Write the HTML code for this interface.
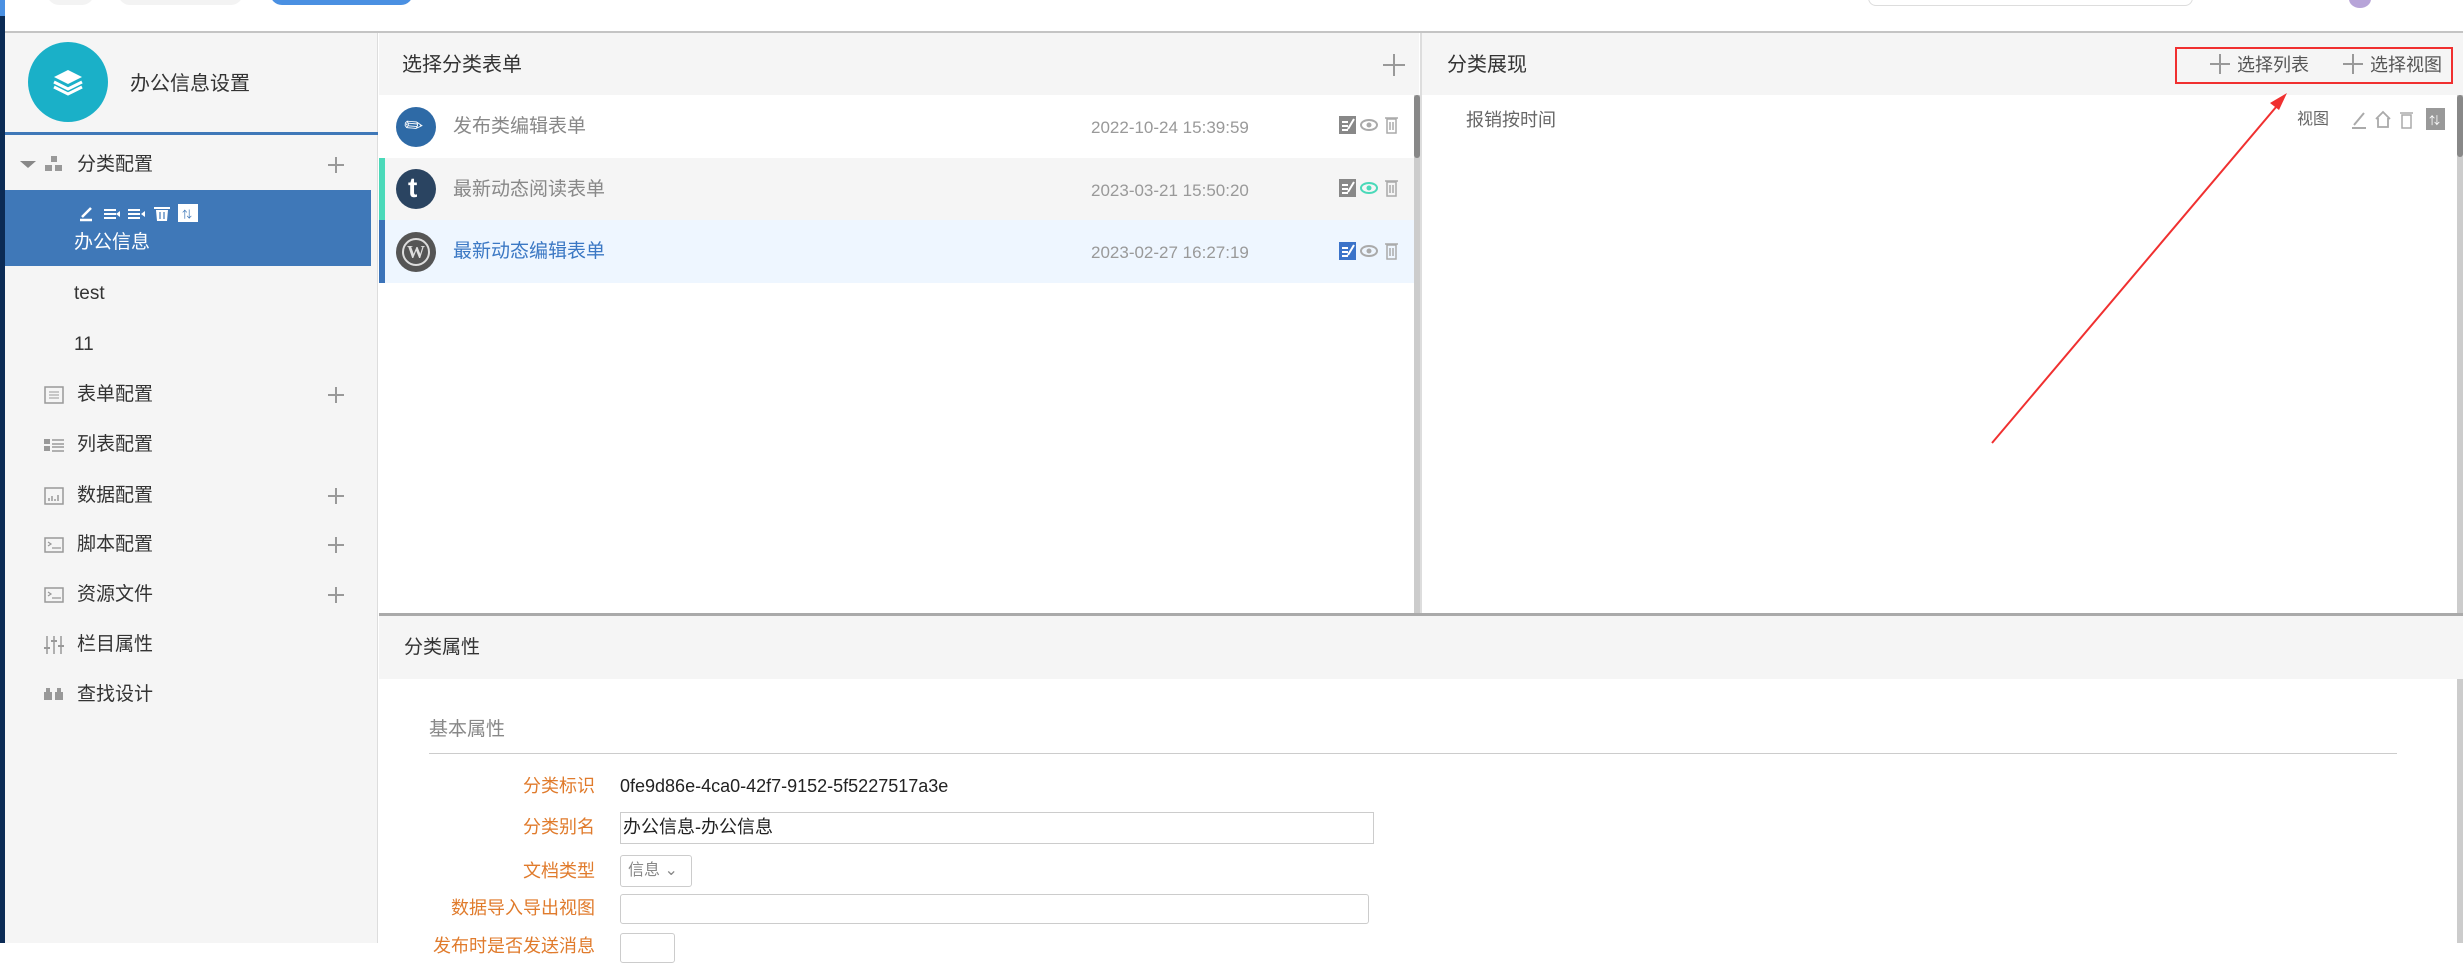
<!DOCTYPE html>
<html><head><meta charset="utf-8"><style>
*{margin:0;padding:0;box-sizing:border-box}
body{width:2463px;height:943px;overflow:hidden;background:#fff;position:relative;font-family:"Liberation Sans","Noto Sans CJK SC",sans-serif;}
.a{position:absolute}
.t{position:absolute;white-space:nowrap;line-height:1}
.mi{font-size:19px;color:#333}
.plus{position:absolute;width:16px;height:16px}
.plus:before{content:"";position:absolute;left:0;top:7px;width:16px;height:2px;background:#999}
.plus:after{content:"";position:absolute;left:7px;top:0;width:2px;height:16px;background:#999}
.lbl{position:absolute;right:1868px;font-size:18px;color:#e07b2c;white-space:nowrap;line-height:1}
</style></head><body>
<div class="a" style="left:0;top:0;width:5px;height:16px;background:#4a90e2"></div>
<div class="a" style="left:0;top:16px;width:5px;height:927px;background:#0b2b55"></div>
<div class="a" style="left:47px;top:-20px;width:47px;height:25px;border-radius:12px;background:#f3f3f3"></div>
<div class="a" style="left:118px;top:-20px;width:125px;height:25px;border-radius:12px;background:#f3f3f3"></div>
<div class="a" style="left:270px;top:-20px;width:143px;height:25px;border-radius:12px;background:#4a90e2"></div>
<div class="a" style="left:1868px;top:-20px;width:325px;height:26px;border-radius:8px;border:1px solid #ddd"></div>
<div class="a" style="left:2349px;top:-10px;width:22px;height:18px;border-radius:50%;background:#b7a4d8"></div>
<div class="a" style="left:5px;top:31px;width:2458px;height:2px;background:#c4c4c4"></div>

<div class="a" style="left:5px;top:33px;width:373px;height:910px;background:#f5f5f5;border-right:1px solid #ddd"></div>
<div class="a" style="left:28px;top:42px;width:80px;height:80px;border-radius:50%;background:#1ab0c8"></div>
<svg class="a" style="left:48px;top:62px" width="40" height="40" viewBox="0 0 40 40"><path d="M20 8 L34 15 L20 22 L6 15Z" fill="#fff"/><path d="M6 20 L20 27 L34 20" stroke="#fff" stroke-width="3" fill="none"/><path d="M6 25 L20 32 L34 25" stroke="#fff" stroke-width="3" fill="none"/></svg>
<div class="t" style="left:130px;top:74px;font-size:20px;color:#333">办公信息设置</div>
<div class="a" style="left:5px;top:132px;width:373px;height:3px;background:#3f78b8"></div>

<div class="a" style="left:20px;top:161px;width:0;height:0;border-left:8px solid transparent;border-right:8px solid transparent;border-top:7px solid #888"></div>
<svg class="a" style="left:45px;top:156px" width="18" height="16"><rect x="6" y="0" width="6" height="6" fill="#999"/><rect x="0" y="9" width="7" height="6" fill="#999"/><rect x="10" y="9" width="7" height="6" fill="#999"/></svg>
<div class="t mi" style="left:77px;top:155px">分类配置</div><div class="plus" style="left:328px;top:157px"></div>

<div class="a" style="left:5px;top:190px;width:366px;height:76px;background:#3f78b8"></div>
<svg class="a" style="left:78px;top:203px" width="122" height="20"><path d="M2 17 L14 17 M4 14 L13 5" stroke="#fff" stroke-width="2.5"/><path d="M26 7h12M26 11h12M26 15h12" stroke="#fff" stroke-width="2"/><path d="M42 8v6l-4-3z" fill="#fff"/><path d="M50 7h12M50 11h12M50 15h12" stroke="#fff" stroke-width="2"/><path d="M67 8v6l-4-3z" fill="#fff"/><path d="M76 5h16" stroke="#fff" stroke-width="2"/><path d="M78 7h12l-1 11h-10z" fill="#fff"/><path d="M82 9v7M86 9v7" stroke="#3f78b8" stroke-width="1.2"/><rect x="100" y="1" width="20" height="18" fill="#fff"/><text x="104" y="15" font-size="10" fill="#3f78b8">⇅</text></svg>
<div class="t" style="left:74px;top:233px;font-size:19px;color:#fff">办公信息</div>
<div class="t mi" style="left:74px;top:284px">test</div>
<div class="t mi" style="left:74px;top:335px">11</div>

<svg class="a" style="left:44px;top:386px" width="20" height="18"><rect x="1" y="1" width="18" height="16" fill="none" stroke="#999" stroke-width="1.5"/><path d="M5 6h10M5 9h10M5 12h10" stroke="#999"/></svg>
<div class="t mi" style="left:77px;top:385px">表单配置</div><div class="plus" style="left:328px;top:387px"></div>
<svg class="a" style="left:44px;top:436px" width="20" height="18"><rect x="0" y="3" width="6" height="5" fill="#999"/><rect x="0" y="10" width="6" height="5" fill="#999"/><path d="M8 4h12M8 8h12M8 11h12M8 15h12" stroke="#999" stroke-width="1.5"/></svg>
<div class="t mi" style="left:77px;top:435px">列表配置</div>
<svg class="a" style="left:44px;top:487px" width="20" height="18"><rect x="1" y="1" width="18" height="16" fill="none" stroke="#999" stroke-width="1.5"/><path d="M5 14v-3M8 14v-5M11 14v-2M14 14v-6" stroke="#999" stroke-width="1.5"/></svg>
<div class="t mi" style="left:77px;top:486px">数据配置</div><div class="plus" style="left:328px;top:488px"></div>
<svg class="a" style="left:44px;top:536px" width="20" height="18"><rect x="1" y="2" width="18" height="14" fill="none" stroke="#999" stroke-width="1.5"/><path d="M4 6l3 2-3 2M8 12h9" stroke="#999" stroke-width="1.2" fill="none"/></svg>
<div class="t mi" style="left:77px;top:535px">脚本配置</div><div class="plus" style="left:328px;top:537px"></div>
<svg class="a" style="left:44px;top:586px" width="20" height="18"><rect x="1" y="2" width="18" height="14" fill="none" stroke="#999" stroke-width="1.5"/><path d="M4 6l3 2-3 2M8 12h9" stroke="#999" stroke-width="1.2" fill="none"/></svg>
<div class="t mi" style="left:77px;top:585px">资源文件</div><div class="plus" style="left:328px;top:587px"></div>
<svg class="a" style="left:44px;top:635px" width="20" height="20"><path d="M3 1v18M10 1v18M17 1v18" stroke="#999" stroke-width="1.5"/><path d="M0 13h6M7 6h6M14 11h6" stroke="#999" stroke-width="2"/></svg>
<div class="t mi" style="left:77px;top:635px">栏目属性</div>
<svg class="a" style="left:44px;top:687px" width="20" height="14"><rect x="0" y="5" width="8" height="8" fill="#999"/><rect x="11" y="5" width="8" height="8" fill="#999"/><rect x="2" y="1" width="4" height="5" fill="#999"/><rect x="13" y="1" width="4" height="5" fill="#999"/></svg>
<div class="t mi" style="left:77px;top:685px">查找设计</div>

<div class="a" style="left:379px;top:33px;width:1040px;height:62px;background:#f5f5f5"></div>
<div class="t" style="left:402px;top:55px;font-size:20px;color:#333">选择分类表单</div>
<svg class="a" style="left:1383px;top:54px" width="22" height="22"><path d="M11 0v22M0 11h22" stroke="#999" stroke-width="2"/></svg>
<div class="a" style="left:379px;top:158px;width:1035px;height:62px;background:#f5f5f5"></div>
<div class="a" style="left:379px;top:158px;width:6px;height:62px;background:#4ad9b9"></div>
<div class="a" style="left:379px;top:220px;width:1035px;height:63px;background:#eef6ff"></div>
<div class="a" style="left:379px;top:220px;width:6px;height:63px;background:#3b73b9"></div>
<div class="a" style="left:396px;top:107px;width:40px;height:40px;border-radius:50%;background:#2e6aa6"></div>
<div class="t" style="left:405px;top:115px;font-size:22px;color:#fff;transform:rotate(-40deg)">✎</div>
<div class="a" style="left:396px;top:169px;width:40px;height:40px;border-radius:50%;background:#2a4461"></div>
<div class="t" style="left:408px;top:174px;font-size:28px;font-weight:bold;color:#fff">t</div>
<div class="a" style="left:396px;top:232px;width:40px;height:40px;border-radius:50%;background:#555"></div>
<div class="a" style="left:402px;top:238px;width:28px;height:28px;border-radius:50%;border:2px solid #ddd;color:#ddd;font:bold 18px 'Liberation Serif',serif;text-align:center;line-height:24px">W</div>
<div class="t" style="left:453px;top:117px;font-size:19px;color:#888">发布类编辑表单</div>
<div class="t" style="left:453px;top:180px;font-size:19px;color:#888">最新动态阅读表单</div>
<div class="t" style="left:453px;top:242px;font-size:19px;color:#3b78c4">最新动态编辑表单</div>
<div class="t" style="left:1091px;top:119px;font-size:17px;color:#999">2022-10-24 15:39:59</div>
<div class="t" style="left:1091px;top:182px;font-size:17px;color:#999">2023-03-21 15:50:20</div>
<div class="t" style="left:1091px;top:244px;font-size:17px;color:#999">2023-02-27 16:27:19</div>
<svg class="a" style="left:1339px;top:114px" width="70" height="22"><rect x="0" y="2" width="17" height="18" fill="#888"/><path d="M3 8h6M3 12h6M3 16h6M9 15l6-10" stroke="#fff" stroke-width="2"/><ellipse cx="30" cy="11" rx="8" ry="5" fill="none" stroke="#aaa" stroke-width="2"/><circle cx="30" cy="11" r="2.5" fill="#aaa"/><rect x="48" y="5" width="9" height="14" fill="none" stroke="#aaa" stroke-width="1.5"/><path d="M46 4h13M51 8v8M54 8v8" stroke="#aaa" stroke-width="1.5"/></svg>
<svg class="a" style="left:1339px;top:177px" width="70" height="22"><rect x="0" y="2" width="17" height="18" fill="#888"/><path d="M3 8h6M3 12h6M3 16h6M9 15l6-10" stroke="#fff" stroke-width="2"/><ellipse cx="30" cy="11" rx="8" ry="5" fill="none" stroke="#4ad9b9" stroke-width="2"/><circle cx="30" cy="11" r="2.5" fill="#4ad9b9"/><rect x="48" y="5" width="9" height="14" fill="none" stroke="#aaa" stroke-width="1.5"/><path d="M46 4h13M51 8v8M54 8v8" stroke="#aaa" stroke-width="1.5"/></svg>
<svg class="a" style="left:1339px;top:240px" width="70" height="22"><rect x="0" y="2" width="17" height="18" fill="#3b73c9"/><path d="M3 8h6M3 12h6M3 16h6M9 15l6-10" stroke="#fff" stroke-width="2"/><ellipse cx="30" cy="11" rx="8" ry="5" fill="none" stroke="#aaa" stroke-width="2"/><circle cx="30" cy="11" r="2.5" fill="#aaa"/><rect x="48" y="5" width="9" height="14" fill="none" stroke="#aaa" stroke-width="1.5"/><path d="M46 4h13M51 8v8M54 8v8" stroke="#aaa" stroke-width="1.5"/></svg>
<div class="a" style="left:1414px;top:95px;width:6px;height:518px;background:#ccc"></div>
<div class="a" style="left:1414px;top:95px;width:6px;height:63px;background:#888;border-radius:3px"></div>
<div class="a" style="left:1420px;top:33px;width:2px;height:580px;background:#ddd"></div>

<div class="a" style="left:1422px;top:33px;width:1041px;height:62px;background:#f5f5f5"></div>
<div class="t" style="left:1447px;top:55px;font-size:20px;color:#333">分类展现</div>
<div class="a" style="left:2175px;top:47px;width:278px;height:37px;border:2px solid #f03030"></div>
<svg class="a" style="left:2210px;top:54px" width="20" height="20"><path d="M10 0v20M0 10h20" stroke="#999" stroke-width="2"/></svg>
<div class="t" style="left:2237px;top:56px;font-size:18px;color:#555">选择列表</div>
<svg class="a" style="left:2343px;top:54px" width="20" height="20"><path d="M10 0v20M0 10h20" stroke="#999" stroke-width="2"/></svg>
<div class="t" style="left:2370px;top:56px;font-size:18px;color:#555">选择视图</div>
<div class="t" style="left:1466px;top:111px;font-size:18px;color:#666">报销按时间</div>
<div class="t" style="left:2297px;top:112px;font-size:16px;color:#666">视图</div>
<svg class="a" style="left:2350px;top:107px" width="100" height="24"><path d="M2 21h14M4 18l10-12" stroke="#aaa" stroke-width="2"/><path d="M26 12l7-7 7 7M28 11v9h10v-9" fill="none" stroke="#aaa" stroke-width="1.8"/><rect x="52" y="8" width="9" height="13" fill="none" stroke="#aaa" stroke-width="1.5"/><path d="M50 6h13" stroke="#aaa" stroke-width="1.5"/><rect x="76" y="1" width="19" height="22" fill="#999"/><text x="79" y="17" font-size="11" fill="#fff">⇅</text></svg>
<div class="a" style="left:2457px;top:95px;width:6px;height:518px;background:#ccc"></div>
<div class="a" style="left:2457px;top:95px;width:6px;height:62px;background:#888;border-radius:3px"></div>
<svg class="a" style="left:0;top:0" width="2463" height="943"><line x1="1992" y1="443" x2="2282" y2="100" stroke="#f03030" stroke-width="2"/><path d="M2287 93 L2270 103 L2279 110Z" fill="#f03030"/></svg>

<div class="a" style="left:379px;top:613px;width:2084px;height:3px;background:#aaa"></div>
<div class="a" style="left:379px;top:616px;width:2084px;height:63px;background:#f5f5f5"></div>
<div class="t" style="left:404px;top:638px;font-size:19px;color:#333">分类属性</div>
<div class="a" style="left:2457px;top:679px;width:6px;height:264px;background:#ccc"></div>
<div class="t" style="left:429px;top:720px;font-size:19px;color:#888">基本属性</div>
<div class="a" style="left:429px;top:753px;width:1968px;height:1px;background:#ccc"></div>
<div class="lbl" style="top:777px">分类标识</div>
<div class="t" style="left:620px;top:777px;font-size:18px;color:#222">0fe9d86e-4ca0-42f7-9152-5f5227517a3e</div>
<div class="lbl" style="top:818px">分类别名</div>
<div class="a" style="left:620px;top:812px;width:754px;height:32px;border:1px solid #ccc"></div>
<div class="t" style="left:623px;top:818px;font-size:18px;color:#222">办公信息-办公信息</div>
<div class="lbl" style="top:862px">文档类型</div>
<div class="a" style="left:620px;top:855px;width:72px;height:32px;border:1px solid #ccc;border-radius:3px"></div>
<div class="t" style="left:628px;top:863px;font-size:16px;color:#888">信息 ⌄</div>
<div class="lbl" style="top:899px">数据导入导出视图</div>
<div class="a" style="left:620px;top:894px;width:749px;height:30px;border:1px solid #ccc;border-radius:3px"></div>
<div class="lbl" style="top:937px">发布时是否发送消息</div>
<div class="a" style="left:620px;top:933px;width:55px;height:30px;border:1px solid #ccc;border-radius:3px"></div>
</body></html>
